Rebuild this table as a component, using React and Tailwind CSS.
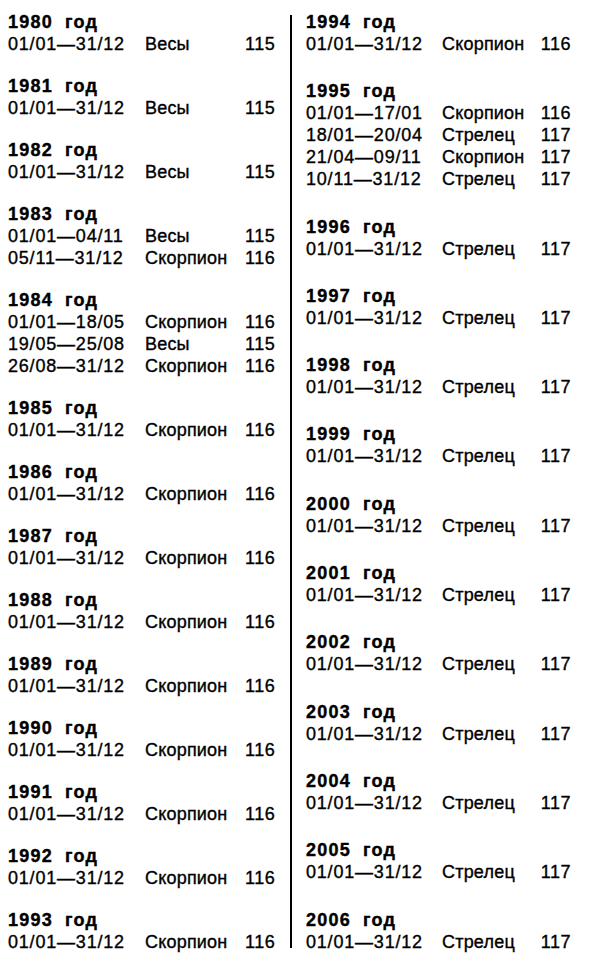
const left = [
  { y: "1980", rows: [["01/01—31/12", "Весы", "115"]] },
  { y: "1981", rows: [["01/01—31/12", "Весы", "115"]] },
  { y: "1982", rows: [["01/01—31/12", "Весы", "115"]] },
  { y: "1983", rows: [["01/01—04/11", "Весы", "115"], ["05/11—31/12", "Скорпион", "116"]] },
  {
    y: "1984",
    rows: [
      ["01/01—18/05", "Скорпион", "116"],
      ["19/05—25/08", "Весы", "115"],
      ["26/08—31/12", "Скорпион", "116"],
    ],
  },
  { y: "1985", rows: [["01/01—31/12", "Скорпион", "116"]] },
  { y: "1986", rows: [["01/01—31/12", "Скорпион", "116"]] },
  { y: "1987", rows: [["01/01—31/12", "Скорпион", "116"]] },
  { y: "1988", rows: [["01/01—31/12", "Скорпион", "116"]] },
  { y: "1989", rows: [["01/01—31/12", "Скорпион", "116"]] },
  { y: "1990", rows: [["01/01—31/12", "Скорпион", "116"]] },
  { y: "1991", rows: [["01/01—31/12", "Скорпион", "116"]] },
  { y: "1992", rows: [["01/01—31/12", "Скорпион", "116"]] },
  { y: "1993", rows: [["01/01—31/12", "Скорпион", "116"]] },
];

const right = [
  { y: "1994", rows: [["01/01—31/12", "Скорпион", "116"]] },
  {
    y: "1995",
    rows: [
      ["01/01—17/01", "Скорпион", "116"],
      ["18/01—20/04", "Стрелец", "117"],
      ["21/04—09/11", "Скорпион", "117"],
      ["10/11—31/12", "Стрелец", "117"],
    ],
  },
  ...["1996", "1997", "1998", "1999", "2000", "2001", "2002", "2003", "2004", "2005", "2006"].map((y) => ({
    y,
    rows: [["01/01—31/12", "Стрелец", "117"]],
  })),
];

function Entry({ year, rows, side }) {
  const dateW = side === "left" ? "w-[137px]" : "w-[136px]";
  const signW = side === "left" ? "w-[100px]" : "w-[95px]";
  const numW = side === "left" ? "w-[29px]" : "w-[34px]";
  return (
    <div>
      <div className="font-bold tracking-[1.2px] [word-spacing:6px] [-webkit-text-stroke:0.4px_black]">
        {year} год
      </div>
      {rows.map(([d, s, n], i) => (
        <div key={i} className="flex [-webkit-text-stroke:0.35px_black]">
          <span className={`${dateW} shrink-0 tracking-[0.8px]`}>{d}</span>
          <span className={`${signW} shrink-0 tracking-[0.2px]`}>{s}</span>
          <span className={`${numW} shrink-0 text-right tracking-[0.5px]`}>{n}</span>
        </div>
      ))}
    </div>
  );
}

export default function App() {
  return (
    <div className="flex h-[961px] w-[592px] bg-white pt-[11px] font-['Liberation_Sans',Arial,sans-serif] text-[18px] leading-[22px] text-black">
      <div className="flex w-[290px] shrink-0 flex-col gap-[20px] pl-[8px]">
        {left.map((e) => (
          <Entry key={e.y} year={e.y} rows={e.rows} side="left" />
        ))}
      </div>
      <div className="mt-[4px] h-[933px] w-[2px] shrink-0 bg-black" />
      <div className="flex flex-col gap-[25.3px] pl-[14px]">
        {right.map((e) => (
          <Entry key={e.y} year={e.y} rows={e.rows} side="right" />
        ))}
      </div>
    </div>
  );
}
